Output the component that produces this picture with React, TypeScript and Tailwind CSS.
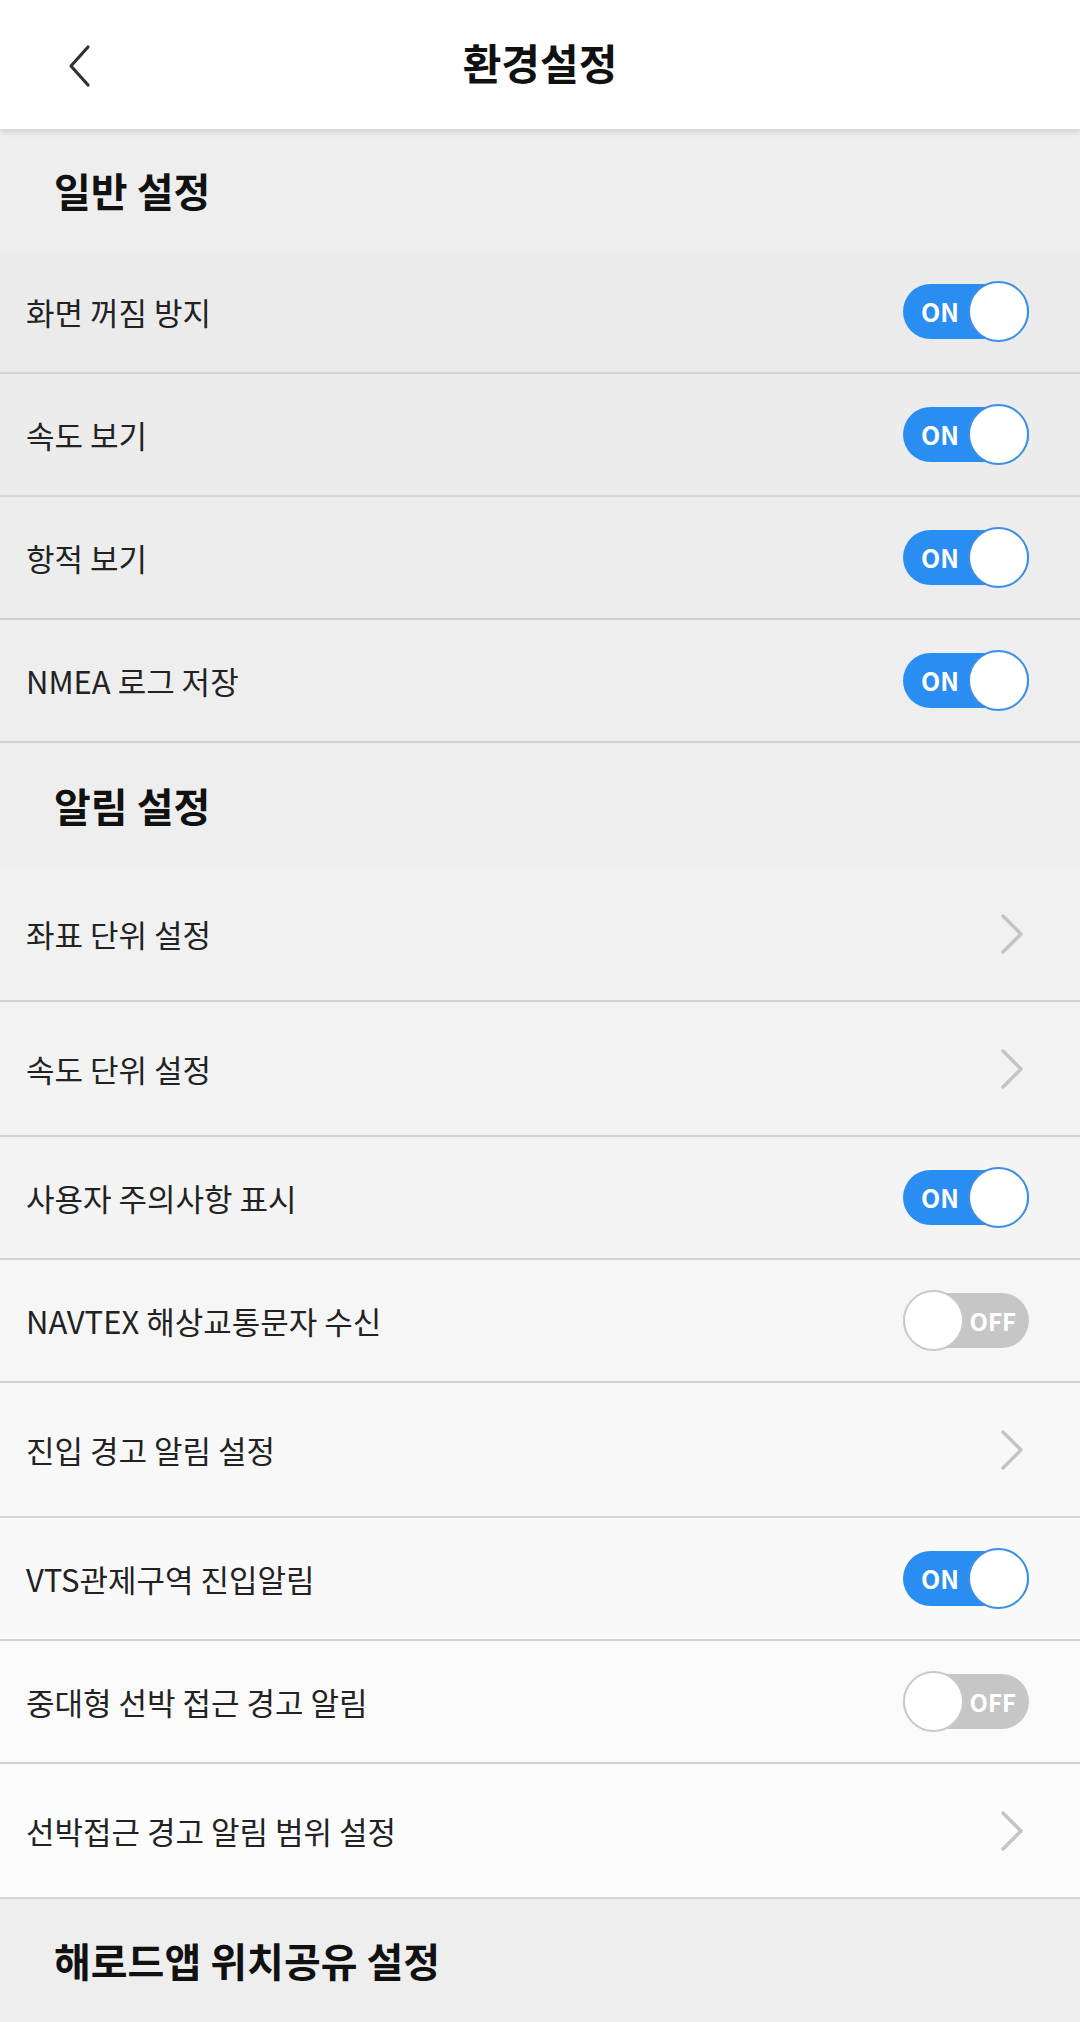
import React from 'react'

type Row =
  | { kind: 'toggle'; label: string; on: boolean; bg: string }
  | { kind: 'link'; label: string; bg: string }

const generalRows: Row[] = [
  { kind: 'toggle', label: '화면 꺼짐 방지', on: true, bg: 'bg-[#ebebeb]' },
  { kind: 'toggle', label: '속도 보기', on: true, bg: 'bg-[#ececec]' },
  { kind: 'toggle', label: '항적 보기', on: true, bg: 'bg-[#ededed]' },
  { kind: 'toggle', label: 'NMEA 로그 저장', on: true, bg: 'bg-[#eeeeee]' },
]

const alarmRows: Row[] = [
  { kind: 'link', label: '좌표 단위 설정', bg: 'bg-[#f1f1f1]' },
  { kind: 'link', label: '속도 단위 설정', bg: 'bg-[#f3f3f3]' },
  { kind: 'toggle', label: '사용자 주의사항 표시', on: true, bg: 'bg-[#f4f4f4]' },
  { kind: 'toggle', label: 'NAVTEX 해상교통문자 수신', on: false, bg: 'bg-[#f6f6f6]' },
  { kind: 'link', label: '진입 경고 알림 설정', bg: 'bg-[#f8f8f8]' },
  { kind: 'toggle', label: 'VTS관제구역 진입알림', on: true, bg: 'bg-[#f9f9f9]' },
  { kind: 'toggle', label: '중대형 선박 접근 경고 알림', on: false, bg: 'bg-[#fafafa]' },
  { kind: 'link', label: '선박접근 경고 알림 범위 설정', bg: 'bg-[#fcfcfc]' },
]

function Toggle({ on }: { on: boolean }) {
  if (on) {
    return (
      <div className="relative flex h-[61px] w-[126px] items-center">
        <div className="flex h-[55px] w-full items-center rounded-full bg-[#2a8df2] pl-[18px]">
          <span className="text-[25px] font-semibold leading-none text-white">ON</span>
        </div>
        <div className="absolute right-0 top-0 h-[61px] w-[61px] rounded-full border-2 border-[#3d8fe6] bg-white" />
      </div>
    )
  }
  return (
    <div className="relative flex h-[61px] w-[126px] items-center">
      <div className="flex h-[55px] w-full items-center justify-end rounded-full bg-[#c6c6c6] pr-[13px]">
        <span className="text-[24px] font-semibold leading-none text-white">OFF</span>
      </div>
      <div className="absolute left-0 top-0 h-[61px] w-[61px] rounded-full border-2 border-[#c9c9c9] bg-white" />
    </div>
  )
}

function Chevron() {
  return (
    <svg width="26" height="44" viewBox="0 0 26 44" fill="none" className="mr-[3px]">
      <path d="M4 4 L22 22 L4 40" stroke="#c4c4c4" strokeWidth="3.5" strokeLinecap="round" strokeLinejoin="round" />
    </svg>
  )
}

function SettingRow({ row }: { row: Row }) {
  return (
    <div
      className={`flex items-center justify-between border-b-2 border-[#d2d2d2] pl-[26px] ${
        row.kind === 'toggle' ? 'h-[123px] pr-[51px]' : 'h-[135px] pr-[52px]'
      } ${row.bg}`}
    >
      <span className="text-[31px] leading-none text-[#222]">{row.label}</span>
      {row.kind === 'toggle' ? <Toggle on={row.on} /> : <Chevron />}
    </div>
  )
}

function SectionTitle({ title, className = '' }: { title: string; className?: string }) {
  return (
    <div className={`flex h-[122px] items-center bg-[#eeeeee] pl-[54px] ${className}`}>
      <h2 className="text-[40px] font-bold leading-none text-[#111]">{title}</h2>
    </div>
  )
}

export default function App() {
  return (
    <div
      className="flex h-[2022px] w-[1080px] flex-col overflow-hidden bg-[#eeeeee]"
      style={{ fontFamily: '"Noto Sans CJK KR", "Noto Sans", sans-serif' }}
    >
      <header className="relative z-10 flex h-[129px] shrink-0 items-center justify-center bg-white shadow-[0_3px_6px_rgba(0,0,0,0.12)]">
        <button type="button" className="absolute left-[60px] top-[38px] p-1">
          <svg width="30" height="48" viewBox="0 0 30 48" fill="none">
            <path d="M24 5 L7 24 L24 43" stroke="#333" strokeWidth="3.2" strokeLinecap="round" strokeLinejoin="round" />
          </svg>
        </button>
        <h1 className="mb-[6px] text-[42px] font-bold leading-none text-[#111]">환경설정</h1>
      </header>

      <SectionTitle title="일반 설정" className="bg-[#ececec]" />
      {generalRows.map((r) => (
        <SettingRow key={r.label} row={r} />
      ))}

      <SectionTitle title="알림 설정" className="h-[124px]" />
      {alarmRows.map((r) => (
        <SettingRow key={r.label} row={r} />
      ))}

      <SectionTitle title="해로드앱 위치공유 설정" />
    </div>
  )
}
